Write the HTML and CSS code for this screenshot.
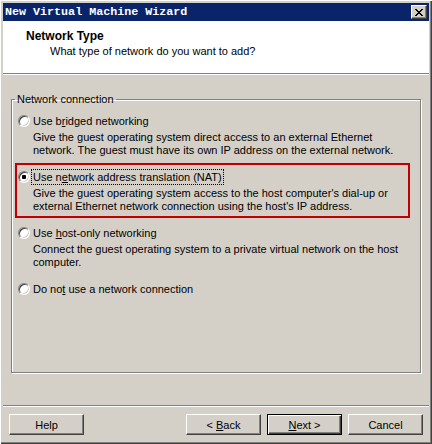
FILE: index.html
```html
<!DOCTYPE html>
<html lang="en">
<head>
    <meta charset="UTF-8">
    <meta name="viewport" content="width=device-width, initial-scale=1.0">
    <title>New Virtual Machine Wizard</title>
    <link rel="stylesheet" href="styles.css">
</head>
<body>
    <div class="window">
        <div class="titlebar">
            <span class="title">New Virtual Machine Wizard</span>
            <span class="close-btn">
                <svg width="8" height="7" viewBox="0 0 8 7" shape-rendering="crispEdges">
                    <path fill="#000" d="M0 0h2v1H0z M6 0h2v1H6z M1 1h2v1H1z M5 1h2v1H5z M2 2h4v1H2z M3 3h2v1H3z M2 4h4v1H2z M1 5h2v1H1z M5 5h2v1H5z M0 6h2v1H0z M6 6h2v1H6z"/>
                </svg>
            </span>
        </div>
        <div class="header">
            <div class="header-title">Network Type</div>
            <div class="header-sub">What type of network do you want to add?</div>
        </div>
        <div class="content">
            <fieldset class="group">
                <legend>Network connection</legend>
                <div class="option">
                    <span class="radio"></span>
                    <div class="option-text">
                        <div class="option-label">Use b<u>r</u>idged networking</div>
                        <div class="option-desc">Give the guest operating system direct access to an external Ethernet<br>network. The guest must have its own IP address on the external network.</div>
                    </div>
                </div>
                <div class="option marked">
                    <span class="radio checked"></span>
                    <div class="option-text">
                        <div class="option-label"><span class="focus">Use n<u>e</u>twork address translation (NAT)</span></div>
                        <div class="option-desc">Give the guest operating system access to the host computer's dial-up or<br>external Ethernet network connection using the host's IP address.</div>
                    </div>
                </div>
                <div class="option">
                    <span class="radio"></span>
                    <div class="option-text">
                        <div class="option-label">Use <u>h</u>ost-only networking</div>
                        <div class="option-desc">Connect the guest operating system to a private virtual network on the host<br>computer.</div>
                    </div>
                </div>
                <div class="option">
                    <span class="radio"></span>
                    <div class="option-text">
                        <div class="option-label">Do no<u>t</u> use a network connection</div>
                    </div>
                </div>
            </fieldset>
        </div>
        <div class="footer">
            <button type="button" class="btn">Help</button>
            <button type="button" class="btn btn-back">&lt; <u>B</u>ack</button>
            <button type="button" class="btn btn-default"><u>N</u>ext &gt;</button>
            <button type="button" class="btn">Cancel</button>
        </div>
    </div>
</body>
</html>
```

FILE: styles.css
```css
body {
    margin: 0;
    font-family: "Liberation Sans", Arial, sans-serif;
    font-size: 11px;
    line-height: 13px;
    color: #000;
}
.window {
    box-sizing: border-box;
    width: 432px;
    height: 444px;
    padding: 3px 3px 4px 3px;
    background: #d4d0c8;
    box-shadow: inset 1px 1px #fff, inset -1px -1px #404040, inset -2px -2px #808080;
    display: flex;
    flex-direction: column;
}
.titlebar {
    height: 18px;
    background: #0a246a;
    display: flex;
    align-items: center;
    justify-content: space-between;
    padding: 0 2px 0 2px;
}
.title {
    color: #fff;
    font-family: "Liberation Mono", "Courier New", monospace;
    font-weight: bold;
    font-size: 11.7px;
    line-height: 14px;
}
.close-btn {
    box-sizing: border-box;
    width: 16px;
    height: 14px;
    background: #d4d0c8;
    border: 1px solid;
    border-color: #fff #404040 #404040 #fff;
    box-shadow: inset -1px -1px #808080;
    display: flex;
    align-items: center;
    justify-content: center;
}
.header {
    box-sizing: border-box;
    height: 53px;
    background: #fff;
    border-bottom: 1px solid #808080;
    padding: 8px 0 0 23px;
}
.header-title {
    font-weight: bold;
    font-size: 12px;
    line-height: 15px;
}
.header-sub {
    margin: 1px 0 0 24px;
}
.content {
    flex: 1;
    border-top: 1px solid #fff;
    padding: 18px 8px 32px 8px;
    display: flex;
    flex-direction: column;
}
.group {
    flex: 1;
    margin: 0;
    min-width: 0;
    padding: 9px 6px 6px 6px;
    border: 1px solid #808080;
    box-shadow: 1px 1px #fff, inset 1px 1px #fff;
}
.group legend {
    padding: 0 2px;
    margin-left: -3px;
}
.option {
    display: flex;
    gap: 3px;
    margin-bottom: 14px;
}
.option-label {
    white-space: nowrap;
}
.option-desc {
    margin-top: 3px;
    white-space: nowrap;
}
.radio {
    box-sizing: border-box;
    flex: none;
    width: 12px;
    height: 12px;
    border-radius: 50%;
    background: #fff;
    border: 1px solid;
    border-color: #808080 #fff #fff #808080;
    box-shadow: inset 1px 1px #404040, inset -1px -1px #d4d0c8;
    display: flex;
    align-items: center;
    justify-content: center;
}
.radio.checked::before {
    content: "";
    width: 4px;
    height: 4px;
    border-radius: 1px;
    background: #000;
}
.focus {
    outline: 1px dotted #000;
    outline-offset: 1px;
}
/* red annotation frame drawn over the NAT option */
.marked {
    position: relative;
}
.marked::after {
    content: "";
    position: absolute;
    left: -3px;
    top: -8px;
    right: 4px;
    bottom: -5px;
    border: 2px solid #c00000;
}
.footer {
    display: flex;
    gap: 6px;
    border-top: 1px solid #808080;
    box-shadow: inset 0 1px #fff;
    padding: 8px 6px 5px 6px;
}
.btn {
    box-sizing: border-box;
    width: 75px;
    height: 21px;
    padding: 0;
    font-family: "Liberation Sans", Arial, sans-serif;
    font-size: 11px;
    color: #000;
    background: #d4d0c8;
    border: 1px solid;
    border-color: #fff #404040 #404040 #fff;
    box-shadow: inset -1px -1px #808080;
}
.btn-back {
    margin-left: auto;
}
.btn-default {
    border: 1px solid #000;
    box-shadow: inset 1px 1px #fff, inset -1px -1px #404040, inset -2px -2px #808080;
}
```
